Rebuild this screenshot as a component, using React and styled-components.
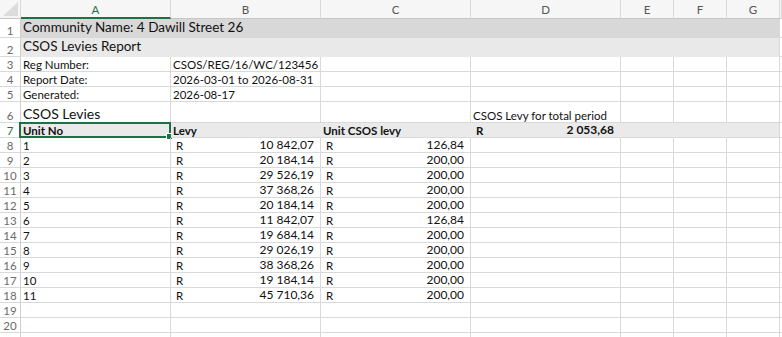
import React from "react";
import styled, { createGlobalStyle, css } from "styled-components";

const GRID = "#d9d9d9";
const GREEN = "#1e7145";
const COLS = "21px 150px 150px 150px 150px 53px 53px 53px 1fr";

const Global = createGlobalStyle`
  html, body { margin: 0; padding: 0; background: #fff; }
  body { font-family: Lato, "Open Sans", sans-serif; color: #111; }
  * { box-sizing: border-box; }
`;

const Sheet = styled.div`
  width: 782px;
  height: 337px;
  overflow: hidden;
  background: #fff;
`;

const Row = styled.div`
  display: grid;
  grid-template-columns: ${COLS};
  height: ${(p) => p.$h}px;
`;

const HeaderRow = styled(Row)`
  background: #f6f6f6;
`;

const Corner = styled.div`
  border-right: 1px solid ${GRID};
  border-bottom: 1px solid #c6c6c6;
  svg { display: block; }
`;

const ColHead = styled.div`
  display: flex;
  align-items: center;
  justify-content: center;
  font-size: 11.5px;
  color: ${(p) => (p.$active ? GREEN : "#555")};
  border-right: 1px solid ${GRID};
  border-bottom: ${(p) => (p.$active ? `2px solid ${GREEN}` : "1px solid #c6c6c6")};
  padding-top: ${(p) => (p.$active ? "1px" : "0")};
`;

const RowHead = styled.div`
  display: flex;
  align-items: flex-end;
  justify-content: center;
  padding-bottom: 1px;
  font-size: 11.5px;
  line-height: 1;
  color: ${(p) => (p.$active ? GREEN : "#6a6a6a")};
  border-right: 1px solid ${(p) => (p.$active ? GREEN : "#cfcfcf")};
  border-bottom: 1px solid ${GRID};
  background: #fff;
`;

const Cell = styled.div`
  position: relative;
  display: flex;
  align-items: flex-end;
  justify-content: ${(p) => (p.$split ? "space-between" : "flex-start")};
  padding: 0 ${(p) => (p.$split ? 6 : 2)}px 1px ${(p) => p.$pl ?? 2}px;
  white-space: nowrap;
  font-size: ${(p) => p.$fs ?? 11.5}px;
  font-weight: ${(p) => (p.$bold ? 700 : 400)};
  line-height: 1;
  background: ${(p) => p.$fill ?? "transparent"};
  border-right: 1px solid ${(p) => p.$fill ?? GRID};
  border-bottom: 1px solid ${GRID};
  ${(p) =>
    p.$span &&
    css`
      grid-column: span ${p.$span};
      border-right-color: ${GRID};
      border-bottom-color: ${p.$fill};
      align-items: center;
      padding-top: 1px;
    `}
  ${(p) =>
    p.$edge &&
    css`
      border-right-color: ${GRID};
    `}
`;

const Amount = styled.span`
  font-size: 12px;
`;

const Selection = styled.div`
  position: absolute;
  left: -2px;
  top: -1px;
  right: -1px;
  bottom: -1px;
  border: 2px solid ${GREEN};
  pointer-events: none;
  &::after {
    content: "";
    position: absolute;
    right: -4px;
    bottom: -4px;
    width: 5px;
    height: 5px;
    background: ${GREEN};
    border: 1px solid #fff;
  }
`;

const letters = ["A", "B", "C", "D", "E", "F", "G"];

const data = [
  ["1", "10 842,07", "126,84"],
  ["2", "20 184,14", "200,00"],
  ["3", "29 526,19", "200,00"],
  ["4", "37 368,26", "200,00"],
  ["5", "20 184,14", "200,00"],
  ["6", "11 842,07", "126,84"],
  ["7", "19 684,14", "200,00"],
  ["8", "29 026,19", "200,00"],
  ["9", "38 368,26", "200,00"],
  ["10", "19 184,14", "200,00"],
  ["11", "45 710,36", "200,00"],
];

const Empties = ({ n }) =>
  Array.from({ length: n }, (_, i) => <Cell key={i} />);

const Money = ({ value, fill, bold }) => (
  <Cell $split $pl={5} $fill={fill} $bold={bold}>
    <span>R</span>
    <Amount>{value}</Amount>
  </Cell>
);

export default function App() {
  const FILL7 = "#eaeaea";
  return (
    <>
      <Global />
      <Sheet>
        <HeaderRow $h={19}>
          <Corner>
            <svg width="20" height="18" viewBox="0 0 20 18">
              <polygon points="18,2 18,16 3,16" fill="#dcdcdc" />
            </svg>
          </Corner>
          {letters.map((l) => (
            <ColHead key={l} $active={l === "A"}>{l}</ColHead>
          ))}
          <ColHead />
        </HeaderRow>

        <Row $h={19}>
          <RowHead>1</RowHead>
          <Cell $span={7} $fill="#d8d8d8" $fs={13.5}>Community Name: 4 Dawill Street 26</Cell>
          <Cell />
        </Row>
        <Row $h={19}>
          <RowHead>2</RowHead>
          <Cell $span={7} $fill="#e9e9e9" $fs={13.5}>CSOS Levies Report</Cell>
          <Cell />
        </Row>
        <Row $h={15}>
          <RowHead>3</RowHead>
          <Cell>Reg Number:</Cell>
          <Cell>CSOS/REG/16/WC/123456</Cell>
          <Empties n={6} />
        </Row>
        <Row $h={15}>
          <RowHead>4</RowHead>
          <Cell>Report Date:</Cell>
          <Cell>2026-03-01 to 2026-08-31</Cell>
          <Empties n={6} />
        </Row>
        <Row $h={15}>
          <RowHead>5</RowHead>
          <Cell>Generated:</Cell>
          <Cell>2026-08-17</Cell>
          <Empties n={6} />
        </Row>
        <Row $h={21}>
          <RowHead>6</RowHead>
          <Cell $fs={14}>CSOS Levies</Cell>
          <Cell />
          <Cell />
          <Cell>CSOS Levy for total period</Cell>
          <Empties n={4} />
        </Row>
        <Row $h={15}>
          <RowHead $active>7</RowHead>
          <Cell $fill={FILL7} $bold>
            Unit No
            <Selection />
          </Cell>
          <Cell $fill={FILL7} $bold>Levy</Cell>
          <Cell $fill={FILL7} $bold>Unit CSOS levy</Cell>
          <Money value="2 053,68" fill={FILL7} bold />
          <Cell $fill={FILL7} />
          <Cell $fill={FILL7} />
          <Cell $fill={FILL7} $edge />
          <Cell />
        </Row>
        {data.map(([u, levy, csos], i) => (
          <Row $h={15} key={u}>
            <RowHead>{8 + i}</RowHead>
            <Cell>{u}</Cell>
            <Money value={levy} />
            <Money value={csos} />
            <Empties n={5} />
          </Row>
        ))}
        {[19, 20].map((n) => (
          <Row $h={15} key={n}>
            <RowHead>{n}</RowHead>
            <Empties n={8} />
          </Row>
        ))}
        <Row $h={15}>
          <RowHead />
          <Empties n={8} />
        </Row>
      </Sheet>
    </>
  );
}
